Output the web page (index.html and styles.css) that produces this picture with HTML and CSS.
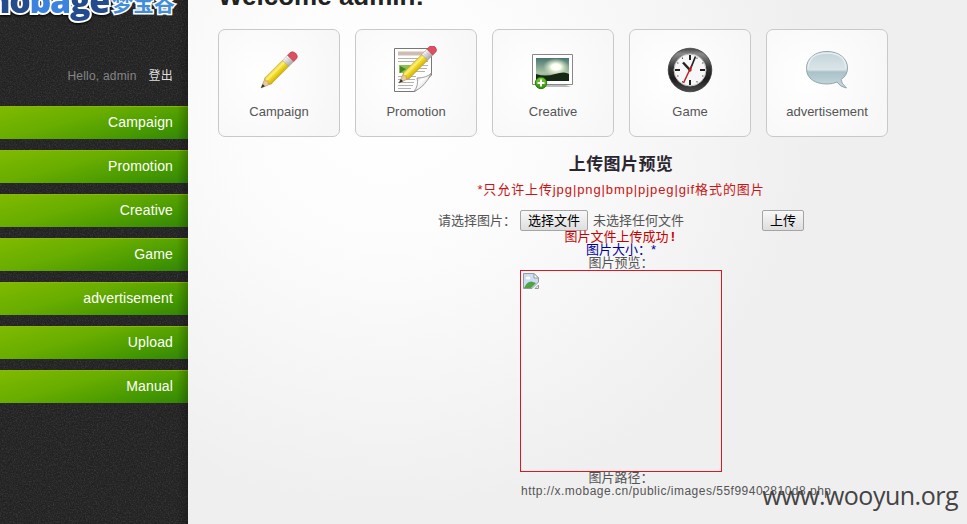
FILE: index.html
```
<!DOCTYPE html>
<html lang="zh-CN">
<head>
<meta charset="utf-8">
<title>Mobage Admin</title>
<link rel="stylesheet" href="styles.css">
</head>
<body>
<div class="layout">
  <aside class="sidebar">
    <svg class="grain" width="188" height="524" aria-hidden="true">
      <filter id="noise"><feTurbulence type="fractalNoise" baseFrequency="0.75" numOctaves="2" seed="4"/><feColorMatrix values="0 0 0 0 1  0 0 0 0 1  0 0 0 0 1  .5 .5 0 0 -.42"/></filter>
      <rect width="188" height="524" filter="url(#noise)"/>
    </svg>
    <div class="logo"><span class="word"><i>mo</i><b>ba</b><i>ge</i></span><span class="cn">梦宝谷</span></div>
    <div class="profile"><span>Hello, admin</span><a>登出</a></div>
    <nav class="menu">
      <a>Campaign</a><a>Promotion</a><a>Creative</a><a>Game</a><a>advertisement</a><a>Upload</a><a>Manual</a>
    </nav>
  </aside>
  <main class="main">
    <h1>Welcome admin!</h1>
    <div class="tiles">
      <a class="tile">
        <svg width="48" height="48" viewBox="0 0 48 48">
          <defs>
            <linearGradient id="wood" x1="0" y1="0" x2="0" y2="1"><stop offset="0" stop-color="#e6cf3c"/><stop offset=".3" stop-color="#fff27a"/><stop offset=".5" stop-color="#f2dc22"/><stop offset="1" stop-color="#cfae18"/></linearGradient>
            <linearGradient id="metal" x1="0" y1="0" x2="0" y2="1"><stop offset="0" stop-color="#fff"/><stop offset="1" stop-color="#a5a5a5"/></linearGradient>
            <g id="pencil">
              <path d="M0 0 11-4.500V4.500Z" fill="#ecca9c" stroke="#b08c66" stroke-width=".6"/>
              <path d="M0 0 4-1.700V1.700Z" fill="#333"/>
              <path d="M10-4.400H35V4.400H10L8 2 10 0 8-2Z" fill="url(#wood)" stroke="#b59b28" stroke-width=".5"/>
              <path d="M35-4.400H42V4.400H35Z" fill="url(#metal)" stroke="#999" stroke-width=".5"/>
              <path d="M37-4V4M39.500-4V4" stroke="#bbb" stroke-width=".6"/>
              <path d="M42-4.400H46Q49-4 49 0T46 4.400H42Z" fill="#de5060" stroke="#b23642" stroke-width=".6"/>
            </g>
          </defs>
          <use href="#pencil" transform="translate(6 42) rotate(-45)"/>
        </svg>
        <span>Campaign</span>
      </a>
      <a class="tile">
        <svg width="48" height="48" viewBox="0 0 48 48">
          <defs><linearGradient id="fold" x1="0" y1="0" x2="1" y2="1"><stop offset="0" stop-color="#aaa"/><stop offset=".4" stop-color="#fff"/><stop offset="1" stop-color="#bbb"/></linearGradient></defs>
          <path d="M2.500 2.500H39.500V29L23 45.500H2.500Z" fill="#fff" stroke="#777"/>
          <path d="M6 7.500H36" stroke="#cfbdb3" stroke-width="4"/>
          <path d="M6 12.500H36M6 15.500H36M19 19.500H36M19 22.500H35M19 25.500H33M6 30.500H24M6 33.500H23M6 36.500H22M6 39.500H21M6 42.500H19" stroke="#b5b1ac"/>
          <path d="M7 19H19V27H7Z" fill="#8cc152"/><path d="M8 20 14 23 8 27Z" fill="#3f8520"/>
          <path d="M39.500 27Q35 32 25 32 27 39 22 45.500 33 41 39.500 27Z" fill="url(#fold)" stroke="#888" stroke-width=".8"/>
          <use href="#pencil" transform="translate(7 37) rotate(-45) scale(1.040 .94)"/>
        </svg>
        <span>Promotion</span>
      </a>
      <a class="tile">
        <svg width="48" height="48" viewBox="0 0 48 48">
          <defs>
            <linearGradient id="sky" x1="0" y1="0" x2="0" y2="1"><stop offset="0" stop-color="#48746f"/><stop offset=".65" stop-color="#a9c4a6"/><stop offset="1" stop-color="#719077"/></linearGradient>
            <radialGradient id="sun"><stop offset="0" stop-color="#fff"/><stop offset=".35" stop-color="#fcfff0"/><stop offset="1" stop-color="#d7e6bd" stop-opacity="0"/></radialGradient>
            <linearGradient id="green" x1="0" y1="0" x2="0" y2="1"><stop offset="0" stop-color="#7fd23b"/><stop offset="1" stop-color="#288b08"/></linearGradient>
          </defs>
          <path d="M7 38Q30 35 42 41H7Z" fill="#bbb"/>
          <path d="M3.500 8.500H43.500V38.500H3.500Z" fill="#fff" stroke="#888"/>
          <path d="M7 12H40V35H7Z" fill="url(#sky)"/>
          <ellipse cx="27" cy="21" rx="13" ry="9" fill="url(#sun)"/>
          <path d="M7 28Q16 31 26 28T40 28V35H7Z" fill="#172716"/>
          <circle cx="12" cy="37" r="5.700" fill="url(#green)" stroke="#248008"/>
          <path d="M12 33.500V40.500M8.500 37H15.500" stroke="#fff" stroke-width="2"/>
        </svg>
        <span>Creative</span>
      </a>
      <a class="tile">
        <svg width="48" height="48" viewBox="0 0 48 48">
          <defs><linearGradient id="rim" x1="0" y1="0" x2="0" y2="1"><stop offset="0" stop-color="#444"/><stop offset=".13" stop-color="#8b8b8b"/><stop offset=".45" stop-color="#333"/><stop offset=".7" stop-color="#1c1c1c"/><stop offset="1" stop-color="#4d4d4d"/></linearGradient></defs>
          <circle cx="24" cy="24" r="21.800" fill="url(#rim)" stroke="#333" stroke-width=".7"/>
          <circle cx="24" cy="24" r="16" fill="#f7f7f7" stroke="#bbb"/>
          <path d="M24 9V14M24 34V39M9 24H14M34 24H39" stroke="#222" stroke-width="2"/>
          <path d="M31 11.500V13M36 17H37.500M31 35V36.500M36 30H37.500M16.500 11.500V13M11 17H12.500M16.500 35V36.500M11 30H12.500" stroke="#555"/>
          <path d="M24 24 17 16.500" stroke="#222" stroke-width="2.500"/><path d="M24 24 29.500 10.500" stroke="#222" stroke-width="1.700"/>
          <path d="M25.500 20 17.500 37" stroke="#b92020" stroke-width="1.500"/><circle cx="24" cy="24" r="1.700" fill="#b92020"/>
        </svg>
        <span>Game</span>
      </a>
      <a class="tile">
        <svg width="48" height="48" viewBox="0 0 48 48">
          <defs><linearGradient id="bubble" x1="0" y1="0" x2="0" y2="1"><stop offset="0" stop-color="#c2d3d9"/><stop offset=".5" stop-color="#dae5e8"/><stop offset=".56" stop-color="#a9c1c9"/><stop offset="1" stop-color="#c9dce1"/></linearGradient></defs>
          <path d="M24 5.500C12 5.500 3.500 12.500 3.500 22.500S12 38 24 38Q30 38 34 36 37 41 43.500 42 38 37 38 33.500 44.500 29.500 44.500 22C44.500 12.500 36 5.500 24 5.500Z" fill="url(#bubble)" stroke="#91a5ac"/>
          <path d="M5 22Q6 7 24 7T43 22" fill="none" stroke="#edf4f5" stroke-width="1.300" opacity=".8"/>
        </svg>
        <span>advertisement</span>
      </a>
    </div>
    <section class="upload">
      <h2>上传图片预览</h2>
      <p class="rule">*只允许上传jpg|png|bmp|pjpeg|gif格式的图片</p>
      <form class="picker">
        <label>请选择图片：</label><button type="button" class="choose">选择文件</button><span class="none">未选择任何文件</span><button type="button" class="send">上传</button>
      </form>
      <p class="line success">图片文件上传成功<span>!</span></p>
      <p class="line size">图片大小：*</p>
      <p class="line">图片预览：</p>
      <div class="preview">
        <svg width="16" height="16" viewBox="0 0 16 16">
          <path d="M.5.500H11L15.500 5V9L9 15.500H.500Z" fill="#cbdcf5" stroke="#999"/>
          <path d="M1 15Q5 7 10 9L13 10 8 15Z" fill="#4fa341"/>
          <ellipse cx="5" cy="5" rx="2.500" ry="1.500" fill="#fff"/>
          <path d="M11 .5V5H15.500Z" fill="#fff" stroke="#999"/>
          <path d="M15.500 12V15.500H12Z" fill="#eef3fb" stroke="#999"/>
        </svg>
      </div>
      <p class="line">图片路径：</p>
      <p class="path">http://x.mobage.cn/public/images/55f99402810d8.php</p>
    </section>
  </main>
</div>
<div class="watermark">www.wooyun.org</div>
</body>
</html>
```
FILE: styles.css
```
* { box-sizing: border-box; }
body { margin: 0; height: 524px; overflow: hidden; font: 13px/13px "Liberation Sans", "Noto Sans CJK SC", sans-serif; color: #555; background: #efefef; }
h1, h2, p { margin: 0; }
.layout { display: grid; grid-template-columns: 188px 1fr; height: 524px; }
.sidebar { position: relative; overflow: hidden; background: #222; }
.sidebar::after { content: ""; position: absolute; inset: 0 0 0 auto; width: 11px; background: linear-gradient(90deg, transparent, rgba(0,0,0,.22)); }
.grain { position: absolute; inset: 0; opacity: .32; }
.logo { position: relative; display: flex; justify-content: flex-end; height: 66px; padding-right: 13px; white-space: nowrap; }
.word { margin-top: -20px; font: 800 34px/40px "Open Sans", sans-serif; letter-spacing: -1.300px; -webkit-text-stroke: 4px #fff; paint-order: stroke fill; filter: drop-shadow(0 1px 1px #000); }
.word i { font-style: normal; color: #244b8d; }
.word b { font-weight: 800; color: #3b83df; }
.cn { margin: -10px 0 0 3px; font: bold 21px/24px "Noto Sans CJK SC", sans-serif; color: #438eda; -webkit-text-stroke: 3px #fff; paint-order: stroke fill; }
.profile { position: relative; display: flex; justify-content: flex-end; gap: 12px; height: 40px; padding: 4px 15px 0 0; font-size: 12px; line-height: 12px; color: #858585; letter-spacing: .2px; }
.profile a { color: #ddd; }
.menu { position: relative; display: grid; gap: 11px; }
.menu a { height: 33px; padding-right: 15px; border-top: 1px solid #8ab50a; background: linear-gradient(165deg, #7fba00 0%, #68ad00 40%, #429600 80%, #338509 100%); color: #fff; font-size: 14px; line-height: 31px; text-align: right; letter-spacing: .14px; }
.main { padding-left: 30px; background: radial-gradient(ellipse 430px 400px at 200px 110px, #fff 0%, #fcfcfc 35%, #efefef 100%) no-repeat; }
h1 { height: 29px; margin-top: -4px; margin-bottom: 4px; color: #222; font-size: 26px; line-height: 0; white-space: nowrap; }
.tiles { display: flex; gap: 15px; }
.tile { display: flex; flex-direction: column; align-items: center; width: 122px; height: 108px; padding-top: 16px; border: 1px solid #c9c9c9; border-radius: 7px; background: radial-gradient(circle at 35% 45%, #fff, #f7f7f7 85%); }
.tile span { margin-top: 11px; line-height: 13px; }
.upload { display: flex; flex-direction: column; width: 806px; text-align: center; }
h2 { height: 36px; padding-top: 19px; color: #2b2630; font-size: 17px; line-height: 18px; letter-spacing: .4px; }
.rule { height: 37px; padding-top: 10px; color: #c81414; line-height: 14px; letter-spacing: .9px; }
.picker { display: flex; align-items: center; width: 586px; height: 21px; padding-left: 220px; white-space: nowrap; }
.picker label { width: 82px; text-align: left; }
.picker button { height: 21px; padding: 0; border: 1px solid #a5a5a5; border-radius: 2px; background: linear-gradient(#f8f8f8, #dedede); color: #000; font: inherit; }
.choose { width: 68px; }
.none { width: 169px; margin-left: 5px; text-align: left; }
.send { width: 42px; }
.line { height: 13px; line-height: 12px; }
.success { color: #c80000; }
.success span { display: inline-block; width: 9px; font-weight: bold; }
.size { color: #0000a0; }
.preview { width: 202px; height: 202px; margin: 0 auto; padding: 2px; border: 1px solid #dc1624; text-align: left; }
.preview svg { display: block; }
.path { width: 202px; margin: 0 auto; padding-left: 1px; text-align: left; white-space: nowrap; font-size: 12px; line-height: 13px; letter-spacing: .5px; }
.watermark { position: absolute; right: 9px; bottom: 12px; color: #444; font: 25px/34px "Open Sans", sans-serif; letter-spacing: -.5px; }
```
